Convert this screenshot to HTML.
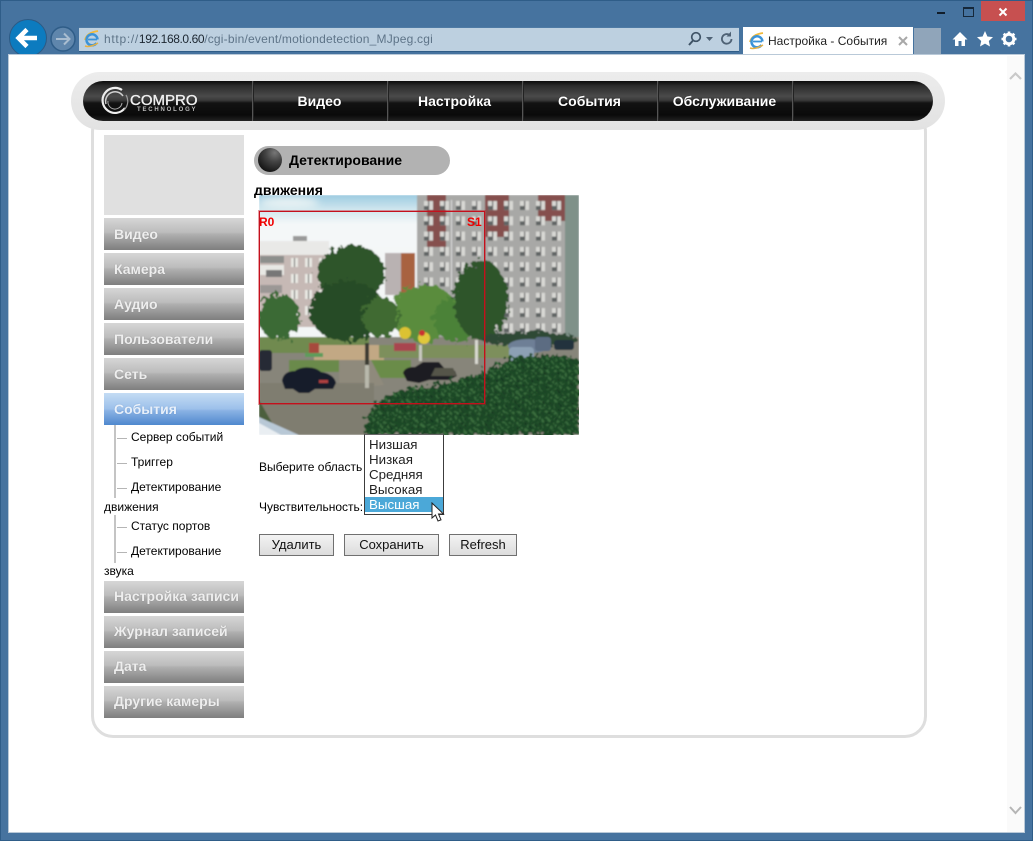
<!DOCTYPE html>
<html lang="ru"><head><meta charset="utf-8"><title>Настройка - События</title>
<style>
html,body{margin:0;padding:0}
body{width:1033px;height:841px;position:relative;overflow:hidden;background:#46739f;font-family:"Liberation Sans",Arial,sans-serif;color:#000}
.a{position:absolute;white-space:nowrap}
.nt{position:absolute;top:92px;width:135px;text-align:center;font-size:14px;font-weight:bold;color:#fff;line-height:18px;text-shadow:0 0 1px #000}
.sep{position:absolute;top:81px;width:1px;height:40px;background:#555;border-right:1px solid #222}
.m{position:absolute;left:104px;width:130px;height:32px;padding-left:10px;line-height:32px;font-size:14px;font-weight:bold;color:#eee;text-shadow:0 0 1px #888;background:linear-gradient(#d6d6d6 0,#bcbcbc 45%,#b0b0b0 50%,#7e7e7e 100%)}
.m.l{line-height:30px}
.m.on{background:linear-gradient(#c4dcf4 0,#9cc0ea 50%,#8ab2e4 55%,#4f88ce 100%);color:#e8f0fa;text-shadow:0 0 1px #6a94c8}
.s{position:absolute;font-size:12px;line-height:14px;color:#000;white-space:nowrap}
.d{position:absolute;left:117px;width:10px;height:1px;background:#b5b5b5}
.b{position:absolute;top:534px;height:20px;border:1px solid #707070;background:linear-gradient(#f3f3f3,#dcdcdc);text-align:center;line-height:20px;font-size:13px;color:#111;box-sizing:content-box}
.o{position:absolute;left:0;width:74px;padding-left:4px;height:15px;line-height:15px;font-size:13.33px;color:#222}
</style></head><body>

<div class="a" style="left:0;top:0;width:1033px;height:841px;box-sizing:border-box;border:1px solid #2f5d88"></div>

<!-- window buttons -->
<div class="a" style="left:937px;top:12px;width:8px;height:2px;background:#111d2a"></div>
<div class="a" style="left:963px;top:7px;width:9px;height:7px;border:1px solid #16283a;border-top-width:2px"></div>
<div class="a" style="left:981px;top:1px;width:44px;height:20px;background:#c75050"></div>
<svg class="a" style="left:998px;top:7px" width="10" height="10" viewBox="0 0 10 10"><path d="M1.5 1.5 8.5 8.5M8.5 1.5 1.5 8.5" stroke="#fff" stroke-width="2"/></svg>

<!-- back / forward -->
<svg class="a" style="left:8px;top:18px" width="72" height="40" viewBox="0 0 72 40">
<circle cx="20" cy="20" r="18.5" fill="#0c7bbf" stroke="#2c5a85"/>
<path d="M29 20H11M19 11.500 10.500 20 19 28.500" fill="none" stroke="#fff" stroke-width="4.500"/>
<circle cx="55" cy="21" r="12" fill="#5f86ac" stroke="#2f5d88" stroke-width="1.500"/>
<path d="M48 21H61M56 15.500 61.500 21 56 26.500" fill="none" stroke="#a9bdd0" stroke-width="2"/>
</svg>

<!-- address bar -->
<div class="a" style="left:79px;top:27px;width:660px;height:23px;background:#bdd0e0;border-bottom:1px solid #2f5d88;border-top:1px solid #4f7ba5"></div>
<svg class="a" style="left:83px;top:30px" width="18" height="18" viewBox="0 0 18 18">
<path d="M2 10C3 5 8 2 15 1" fill="none" stroke="#f0b93a" stroke-width="1.800"/>
<path d="M14.500 9.500A5.500 5.500 0 1 0 13.500 13" fill="none" stroke="#3b93d8" stroke-width="2.500"/>
<path d="M5 9.500H14" stroke="#3b93d8" stroke-width="1.800"/>
<path d="M2 16C5 17 10 16 15 13" fill="none" stroke="#e8b040" stroke-width="1.500"/>
</svg>
<div class="a" style="left:104px;top:32px;font-size:12px;line-height:14px;color:#5e7488;letter-spacing:.2px"><span style="letter-spacing:.7px">http://</span><span style="color:#1c2630;letter-spacing:-.4px">192.168.0.60</span>/cgi-bin/event/motiondetection_MJpeg.cgi</div>
<svg class="a" style="left:686px;top:30px" width="50" height="18" viewBox="0 0 50 18">
<circle cx="10" cy="7" r="4.300" fill="none" stroke="#3f5366" stroke-width="1.700"/><path d="M7 10.500 3 15" stroke="#3f5366" stroke-width="2"/>
<path d="M20 7h7l-3.500 4z" fill="#4f6275"/>
<path d="M45.500 9a4.800 4.800 0 1 1-2-4" fill="none" stroke="#4f6275" stroke-width="1.800"/><path d="M45 1.500V6.500H40.500z" fill="#4f6275"/>
</svg>

<!-- tab -->
<div class="a" style="left:743px;top:27px;width:170px;height:28px;background:#fff"></div>
<svg class="a" style="left:748px;top:32px" width="18" height="18" viewBox="0 0 18 18">
<path d="M2 10C3 5 8 2 15 1" fill="none" stroke="#f0b93a" stroke-width="1.800"/>
<path d="M14.500 9.500A5.500 5.500 0 1 0 13.500 13" fill="none" stroke="#3b93d8" stroke-width="2.500"/>
<path d="M5 9.500H14" stroke="#3b93d8" stroke-width="1.800"/>
<path d="M2 16C5 17 10 16 15 13" fill="none" stroke="#e8b040" stroke-width="1.500"/>
</svg>
<div class="a" style="left:768px;top:34px;font-size:12px;line-height:14px;color:#222">Настройка - События</div>
<svg class="a" style="left:898px;top:36px" width="10" height="10" viewBox="0 0 10 10"><path d="M1 1 9 9M9 1 1 9" stroke="#a8a8a8" stroke-width="2"/></svg>
<div class="a" style="left:914px;top:28px;width:27px;height:26px;background:#90a5ba"></div>

<!-- toolbar icons -->
<svg class="a" style="left:951px;top:30px" width="68" height="18" viewBox="0 0 68 18">
<path d="M9 2 1.500 9.500H4V16H7.500V11H10.500V16H14V9.500H16.500z" fill="#fff"/>
<path d="M34 1 36.400 6.500 42 7.100 37.800 11 39 16.500 34 13.600 29 16.500 30.200 11 26 7.100 31.600 6.500z" fill="#fff"/>
<circle cx="58" cy="9" r="4.800" fill="none" stroke="#fff" stroke-width="3"/>
<path d="M58 1.500V4M58 14V16.500M50.500 9H53M63 9H65.500M52.700 3.700 54.500 5.500M61.500 12.500 63.300 14.300M52.700 14.300 54.500 12.500M61.500 5.500 63.300 3.700" stroke="#fff" stroke-width="2.600"/>
</svg>

<!-- content viewport -->
<div class="a" style="left:9px;top:55px;width:1015px;height:777px;background:#fff;box-shadow:0 0 0 1px #b9c9d8"></div>
<div class="a" style="left:1007px;top:56px;width:17px;height:776px;background:#fafafa"></div>
<svg class="a" style="left:1008px;top:70px" width="15" height="12" viewBox="0 0 15 12"><path d="M2 9 7.500 3.500 13 9" fill="none" stroke="#c9c9c9" stroke-width="2.200"/></svg>
<svg class="a" style="left:1008px;top:804px" width="15" height="12" viewBox="0 0 15 12"><path d="M2 3 7.500 9 13 3" fill="none" stroke="#b5b5b5" stroke-width="2"/></svg>

<!-- main rounded panel -->
<div class="a" style="left:91px;top:110px;width:830px;height:622px;border:3px solid #dedede;border-radius:22px;background:#fff"></div>

<!-- nav pill -->
<div class="a" style="left:71px;top:72px;width:874px;height:58px;border-radius:29px;background:linear-gradient(#ececec,#e2e2e2)"></div>
<div class="a" style="left:83px;top:81px;width:850px;height:40px;border-radius:20px;background:linear-gradient(#0c0c0c 0,#2c2c2c 12%,#4a4a4a 38%,#3a3a3a 48%,#121212 55%,#0a0a0a 85%,#222 100%)"></div>
<div class="sep" style="left:252px"></div><div class="sep" style="left:387px"></div><div class="sep" style="left:522px"></div><div class="sep" style="left:657px"></div><div class="sep" style="left:792px"></div>
<svg class="a" style="left:98px;top:84px" width="34" height="32" viewBox="0 0 34 32">
<path d="M24 6A12.500 12.500 0 1 0 27 24" fill="none" stroke="#eee" stroke-width="2.200"/>
<path d="M8 20A9.500 9.500 0 0 1 25 12" fill="none" stroke="#d0d0d0" stroke-width="1.500"/>
<path d="M28 11A12 12 0 0 1 26 26" fill="none" stroke="#999" stroke-width="1.200"/>
<path d="M10 17A7 7 0 0 0 24 19" fill="none" stroke="#aaa" stroke-width="1"/>
</svg>
<div class="a" style="left:130px;top:92px;font-size:15px;line-height:18px;color:#f0f0f0;-webkit-text-stroke:.35px #f0f0f0">COMPRO</div>
<div class="a" style="left:137px;top:106px;font-size:6px;line-height:8px;font-weight:bold;color:#bbb;letter-spacing:1.800px">TECHNOLOGY</div>
<div class="nt" style="left:252px">Видео</div>
<div class="nt" style="left:387px">Настройка</div>
<div class="nt" style="left:522px">События</div>
<div class="nt" style="left:657px">Обслуживание</div>

<!-- left menu -->
<div class="a" style="left:104px;top:135px;width:140px;height:80px;background:#e0e0e0"></div>
<div class="m" style="top:218px">Видео</div>
<div class="m" style="top:253px">Камера</div>
<div class="m" style="top:288px">Аудио</div>
<div class="m" style="top:323px">Пользователи</div>
<div class="m" style="top:358px">Сеть</div>
<div class="m on" style="top:393px">События</div>
<div class="a" style="left:114px;top:425px;width:2px;height:73px;background:#c4c4c4"></div>
<div class="a" style="left:114px;top:515px;width:2px;height:48px;background:#c4c4c4"></div>
<div class="d" style="top:438px"></div><div class="d" style="top:463px"></div><div class="d" style="top:488px"></div><div class="d" style="top:527px"></div><div class="d" style="top:552px"></div>
<div class="s" style="left:131px;top:430px">Сервер событий</div>
<div class="s" style="left:131px;top:455px">Триггер</div>
<div class="s" style="left:131px;top:480px">Детектирование</div>
<div class="s" style="left:104px;top:500px">движения</div>
<div class="s" style="left:131px;top:519px">Статус портов</div>
<div class="s" style="left:131px;top:544px">Детектирование</div>
<div class="s" style="left:104px;top:564px">звука</div>
<div class="m l" style="top:581px">Настройка записи</div>
<div class="m l" style="top:616px">Журнал записей</div>
<div class="m l" style="top:651px">Дата</div>
<div class="m l" style="top:686px">Другие камеры</div>

<!-- heading -->
<div class="a" style="left:254px;top:146px;width:196px;height:29px;border-radius:15px;background:#b2b2b2"></div>
<div class="a" style="left:258px;top:148px;width:24px;height:24px;border-radius:12px;background:radial-gradient(circle at 70% 20%,#777 0,#444 35%,#141414 80%)"></div>
<div class="a" style="left:289px;top:152px;font-size:14px;line-height:16px;font-weight:bold">Детектирование</div>
<div class="a" style="left:254px;top:182px;font-size:14px;line-height:16px;font-weight:bold">движения</div>

<!-- camera photo -->
<svg class="a" style="left:259px;top:195px" width="320" height="240" viewBox="0 0 320 240">
<defs>
<linearGradient id="sky" x1="0" y1="0" x2="0" y2="1"><stop offset="0" stop-color="#9ccbe0"/><stop offset=".06" stop-color="#cfe6ee"/><stop offset=".12" stop-color="#f4f7f8"/><stop offset=".6" stop-color="#f3f6f6"/><stop offset="1" stop-color="#e2e6e6"/></linearGradient>
<pattern id="win" width="16" height="15.300" patternUnits="userSpaceOnUse" x="162" y="3"><rect x="3" y="3" width="9" height="9" fill="#d8d8d4"/><rect x="7" y="3" width="1.200" height="9" fill="#666"/><rect x="3" y="8" width="4" height="4" fill="#5e6463"/></pattern>
<pattern id="win2" width="14" height="16" patternUnits="userSpaceOnUse" x="2" y="60"><rect x="2" y="3" width="7" height="9" fill="#e8e8e2"/><rect x="5" y="3" width="1" height="9" fill="#555"/></pattern>
<filter id="leaf" x="-10%" y="-10%" width="120%" height="120%"><feTurbulence type="fractalNoise" baseFrequency=".2" numOctaves="2" seed="4"/><feDisplacementMap in="SourceGraphic" scale="14"/></filter>
<filter id="blur"><feGaussianBlur stdDeviation=".8"/></filter>
<filter id="soft"><feGaussianBlur stdDeviation="4"/></filter>
<pattern id="dots" width="7" height="6" patternUnits="userSpaceOnUse"><rect width="7" height="6" fill="#1f4a26"/><circle cx="2" cy="2" r="1.500" fill="#3a6e3e"/><circle cx="5.500" cy="4.500" r="1" fill="#143420"/></pattern>
</defs>
<g filter="url(#blur)">
<rect width="320" height="240" fill="url(#sky)"/>
<ellipse cx="30" cy="8" rx="30" ry="6" fill="#e8f2f4" filter="url(#soft)"/>
<!-- left building -->
<rect x="0" y="56" width="70" height="76" fill="#c6b9b5"/>
<rect x="0" y="46" width="70" height="14" fill="#e9e9e7"/>
<rect x="1" y="61" width="24" height="7" fill="#8d8f8c"/>
<rect x="1" y="70" width="24" height="10" fill="#e8e8e4"/><rect x="7" y="75" width="16" height="7" fill="#777"/>
<rect x="1" y="90" width="22" height="8" fill="#9b9795"/>
<rect x="25" y="62" width="45" height="62" fill="url(#win2)"/>
<rect x="34" y="41" width="14" height="5" fill="#999"/>
<!-- small far building -->
<rect x="126" y="58" width="16" height="42" fill="#b9b2b2"/><rect x="142" y="58" width="14" height="44" fill="#a8623f"/>
<!-- big building -->
<rect x="158" y="0" width="162" height="146" fill="#a8a8a6"/>
<rect x="168" y="0" width="19" height="52" fill="#85504e"/>
<rect x="226" y="0" width="24" height="42" fill="#85504e"/>
<rect x="279" y="0" width="27" height="26" fill="#85504e"/>
<rect x="306" y="0" width="14" height="146" fill="#7f9189"/>
<rect x="158" y="0" width="148" height="140" fill="url(#win)"/>
<rect x="192" y="5" width="1" height="90" fill="#ddd"/>
<!-- ground -->
<rect x="0" y="142" width="320" height="98" fill="#87857a"/>
<rect x="0" y="142" width="110" height="16" fill="#6f8a50"/>
<rect x="55" y="150" width="70" height="16" fill="#c2a884"/>
<rect x="30" y="165" width="55" height="12" fill="#6a8a4c"/>
<rect x="112" y="165" width="40" height="18" fill="#6a8c48"/>
<rect x="120" y="150" width="130" height="13" fill="#7d8f5c"/>
<path d="M80 165H112L125 190 80 195z" fill="#8f8a7c"/>
<rect x="0" y="188" width="115" height="52" fill="#7f7d70"/>
<path d="M0 205 20 240H0z" fill="#4c5f3d"/>
<!-- trees -->
<g filter="url(#leaf)">
<ellipse cx="20" cy="122" rx="21" ry="23" fill="#3a6a34"/>
<ellipse cx="165" cy="118" rx="34" ry="28" fill="#5a8c3c"/>
<ellipse cx="198" cy="125" rx="24" ry="22" fill="#4c8238"/>
<ellipse cx="222" cy="105" rx="27" ry="40" fill="#2f552c"/>
<ellipse cx="92" cy="78" rx="34" ry="28" fill="#2f5429"/>
<ellipse cx="88" cy="116" rx="38" ry="30" fill="#284c26"/>
<ellipse cx="122" cy="122" rx="18" ry="20" fill="#3f6a33"/>
<ellipse cx="270" cy="144" rx="48" ry="7" fill="#2e4a36"/>
</g>
<rect x="106" y="148" width="4" height="45" fill="#b8b8ac"/>
<rect x="106" y="148" width="4" height="22" fill="#3a3a30"/>
<rect x="160" y="150" width="3" height="16" fill="#c8c8c0"/>
<rect x="216" y="145" width="3" height="24" fill="#d8d8d0"/>
<!-- playground -->
<circle cx="146" cy="138" r="6" fill="#dcc232"/><circle cx="165" cy="143" r="6" fill="#e0c83a"/><circle cx="163" cy="138" r="3" fill="#c33"/>
<rect x="135" y="148" width="22" height="8" fill="#a84450"/>
<rect x="50" y="148" width="10" height="10" fill="#a6483c"/><rect x="46" y="158" width="18" height="4" fill="#5d9c5c"/>
<!-- cars -->
<ellipse cx="270" cy="151" rx="21" ry="7" fill="#6e7f96"/>
<rect x="250" y="152" width="25" height="14" rx="4" fill="#8ca0b4"/>
<rect x="276" y="142" width="16" height="14" rx="3" fill="#5b6c82"/>
<rect x="295" y="145" width="20" height="10" rx="3" fill="#24303e"/>
<rect x="0" y="155" width="13" height="21" rx="3" fill="#262a36"/>
<path d="M23 186C24 178 30 176 36 176 42 171 56 171 62 177 70 178 76 182 77 188L74 194H56L50 198H40L34 194H26z" fill="#141a2c"/>
<path d="M144 178C146 172 152 172 156 172L164 167H180L186 174 196 176 198 181 190 185H170L160 188 148 186z" fill="#1b1d22"/>
<path d="M176 173H194L198 181H172z" fill="#54544a"/>
<rect x="60" y="185" width="9" height="3" fill="#b04040"/>
<!-- bush -->
<path d="M106 240V228C112 212 120 206 129 202 142 194 152 194 163 192 180 188 195 186 213 182 228 176 238 168 249 165 265 161 280 160 296 160 305 161 312 163 320 165V240z" fill="url(#dots)" filter="url(#leaf)"/>
<!-- railing -->
<path d="M0 222 40 240H0z" fill="#b8c8d6"/>
<path d="M0 228 22 240H0z" fill="#e9eef2"/>
</g>
<text x="0" y="31" font-family="Liberation Sans,Arial,sans-serif" font-size="12" font-weight="bold" fill="#f00000">R0</text>
<text x="208" y="31" font-family="Liberation Sans,Arial,sans-serif" font-size="12" font-weight="bold" fill="#f00000">S1</text>
</svg>
<!-- red region -->
<div class="a" style="left:259px;top:211px;width:224px;height:191px;border:1px solid #c4101c;box-shadow:0 0 0 1px rgba(200,16,28,.4)"></div>

<!-- form -->
<div class="a" style="left:259px;top:460px;font-size:12px;line-height:14px">Выберите область</div>
<div class="a" style="left:259px;top:500px;font-size:12px;line-height:14px">Чувствительность:</div>
<div class="a" style="left:364px;top:434px;width:78px;height:79px;border:1px solid #3c3c3c;background:#fff;border-top-color:#666">
<div class="o" style="top:2px">Низшая</div>
<div class="o" style="top:17px">Низкая</div>
<div class="o" style="top:32px">Средняя</div>
<div class="o" style="top:47px">Высокая</div>
<div class="o" style="top:62px;background:#4ba8d8;color:#fff">Высшая</div>
</div>
<svg class="a" style="left:431px;top:502px" width="14" height="21" viewBox="0 0 14 21"><path d="M1 1V16L4.500 13 7 19 10 17.800 7.500 12H12.500z" fill="#fff" stroke="#222" stroke-width="1"/></svg>
<div class="b" style="left:259px;width:73px">Удалить</div>
<div class="b" style="left:344px;width:93px">Сохранить</div>
<div class="b" style="left:449px;width:66px">Refresh</div>
</body></html>
